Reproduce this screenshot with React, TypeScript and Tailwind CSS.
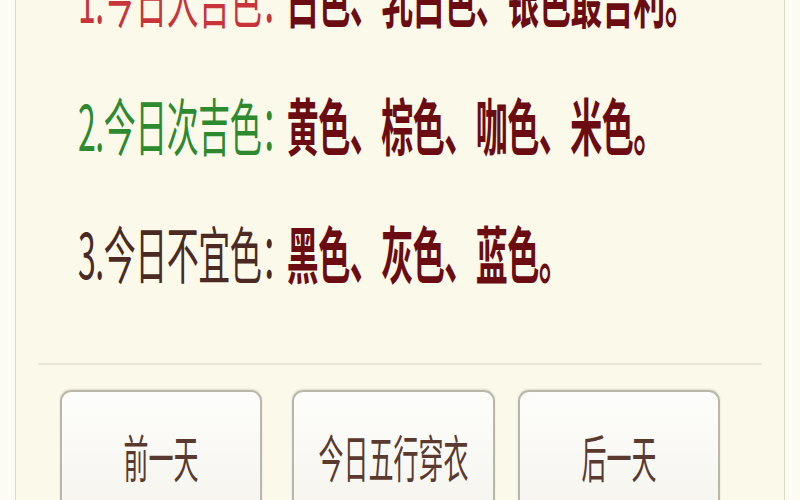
import React from "react";

interface ColorRow {
  label: string;
  labelClass: string;
  value: string;
}

const rows: ColorRow[] = [
  { label: "1.今日大吉色：", labelClass: "text-[#c8343a]", value: "白色、乳白色、银色最吉利。" },
  { label: "2.今日次吉色：", labelClass: "text-[#2d8a2f]", value: "黄色、棕色、咖色、米色。" },
  { label: "3.今日不宜色：", labelClass: "text-[#4a2a22]", value: "黑色、灰色、蓝色。" },
];

const cjk = "font-['Noto_Sans_CJK_SC','Noto_Sans',sans-serif]";

export default function App() {
  return (
    <div className={`w-full h-[500px] overflow-hidden bg-[#fdfcf3] ${cjk}`}>
      <div className="mx-[15px] h-full flex flex-col border-x border-[#dcd8c6] bg-[#fbf9ea]">
        {/* colour advice list */}
        <div className="-mt-[68px] flex flex-col">
          {rows.map((row) => (
            <div key={row.label} className="h-[128px] flex items-center pl-[62px]">
              <div className="flex items-center text-[32px] leading-10 scale-y-[1.95] tracking-[-0.5px]">
                <span className={row.labelClass}>{row.label}</span>
                <span className="font-bold text-[#6a0c12] -ml-[6px]">{row.value}</span>
              </div>
            </div>
          ))}
        </div>

        <div className="mt-[47px] mx-[22px] h-[2px] shrink-0 bg-[#e9e5d5]" />

        {/* day navigation */}
        <div className="mt-[25px] flex shrink-0">
          {[
            { text: "前一天", cls: "ml-[44px] w-[202px]" },
            { text: "今日五行穿衣", cls: "ml-[30px] w-[203px]" },
            { text: "后一天", cls: "ml-[23px] w-[202px]" },
          ].map((b) => (
            <button
              key={b.text}
              className={`${b.cls} h-[130px] flex items-center justify-center rounded-t-[11px] border-2 border-[#bbb6ab] bg-gradient-to-b from-[#fdfdfb] to-[#f5f4ee] shadow-[0_-1px_2px_rgba(0,0,0,0.12)]`}
            >
              <span className="text-[25px] leading-8 text-[#5a3a2e] scale-y-[2.05]">{b.text}</span>
            </button>
          ))}
        </div>
      </div>
    </div>
  );
}
